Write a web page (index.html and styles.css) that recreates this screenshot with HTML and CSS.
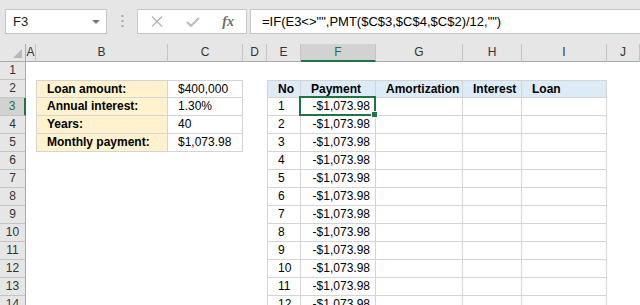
FILE: index.html
```html
<!DOCTYPE html>
<html lang="en">
<head>
    <meta charset="UTF-8">
    <title>PMT loan schedule</title>
    <link rel="stylesheet" href="styles.css">
</head>
<body>
    <div class="formula-bar">
        <div class="name-box">
            <span>F3</span>
            <svg class="caret" width="8" height="4" viewBox="0 0 8 4"><path d="M0 0H8L4 4Z" fill="#7a7a7a"/></svg>
        </div>
        <svg class="grip" width="3" height="13" viewBox="0 0 3 13">
            <rect x="0.5" y="0" width="2" height="2" fill="#a6a6a6"/>
            <rect x="0.5" y="5" width="2" height="2" fill="#a6a6a6"/>
            <rect x="0.5" y="10" width="2" height="2" fill="#a6a6a6"/>
        </svg>
        <div class="fx-buttons">
            <svg width="12" height="11" viewBox="0 0 12 11"><path d="M1 0.5L11 10.5M11 0.5L1 10.5" stroke="#b3b3b3" stroke-width="1.3" fill="none"/></svg>
            <svg width="14" height="10" viewBox="0 0 14 10"><path d="M1 5L5 8.8L13 1" stroke="#bdbdbd" stroke-width="2.2" fill="none"/></svg>
            <span class="fx">fx</span>
        </div>
        <div class="formula">=IF(E3&lt;&gt;"",PMT($C$3,$C$4,$C$2)/12,"")</div>
    </div>

    <div class="sheet">
        <div class="row heads">
            <div class="corner"><svg width="9" height="9" viewBox="0 0 9 9"><path d="M9 0V9H0Z" fill="#b8b8b8"/></svg></div>
            <div>A</div><div>B</div><div>C</div><div>D</div><div>E</div><div class="on">F</div><div>G</div><div>H</div><div>I</div><div>J</div>
        </div>
        <div class="row">
            <div class="rh">1</div>
            <div></div><div></div><div></div><div></div><div></div><div></div><div></div><div></div><div></div><div></div>
        </div>
        <div class="row">
            <div class="rh">2</div>
            <div></div>
            <div class="c lbl top">Loan amount:</div>
            <div class="c val top">$400,000</div>
            <div></div>
            <div class="c no head">No</div>
            <div class="c col head">Payment</div>
            <div class="c col head">Amortization</div>
            <div class="c col head">Interest</div>
            <div class="c col head">Loan</div>
            <div></div>
        </div>
        <div class="row">
            <div class="rh on">3</div>
            <div></div>
            <div class="c lbl">Annual interest:</div>
            <div class="c val">1.30%</div>
            <div></div>
            <div class="c no">1</div>
            <div class="c col amt sel">-$1,073.98</div>
            <div class="c col"></div><div class="c col"></div><div class="c col"></div>
            <div></div>
        </div>
        <div class="row">
            <div class="rh">4</div>
            <div></div>
            <div class="c lbl">Years:</div>
            <div class="c val">40</div>
            <div></div>
            <div class="c no">2</div>
            <div class="c col amt">-$1,073.98</div>
            <div class="c col"></div><div class="c col"></div><div class="c col"></div>
            <div></div>
        </div>
        <div class="row">
            <div class="rh">5</div>
            <div></div>
            <div class="c lbl">Monthly payment:</div>
            <div class="c val">$1,073.98</div>
            <div></div>
            <div class="c no">3</div>
            <div class="c col amt">-$1,073.98</div>
            <div class="c col"></div><div class="c col"></div><div class="c col"></div>
            <div></div>
        </div>
        <div class="row">
            <div class="rh">6</div>
            <div></div><div></div><div></div><div></div>
            <div class="c no">4</div>
            <div class="c col amt">-$1,073.98</div>
            <div class="c col"></div><div class="c col"></div><div class="c col"></div>
            <div></div>
        </div>
        <div class="row">
            <div class="rh">7</div>
            <div></div><div></div><div></div><div></div>
            <div class="c no">5</div>
            <div class="c col amt">-$1,073.98</div>
            <div class="c col"></div><div class="c col"></div><div class="c col"></div>
            <div></div>
        </div>
        <div class="row">
            <div class="rh">8</div>
            <div></div><div></div><div></div><div></div>
            <div class="c no">6</div>
            <div class="c col amt">-$1,073.98</div>
            <div class="c col"></div><div class="c col"></div><div class="c col"></div>
            <div></div>
        </div>
        <div class="row">
            <div class="rh">9</div>
            <div></div><div></div><div></div><div></div>
            <div class="c no">7</div>
            <div class="c col amt">-$1,073.98</div>
            <div class="c col"></div><div class="c col"></div><div class="c col"></div>
            <div></div>
        </div>
        <div class="row">
            <div class="rh">10</div>
            <div></div><div></div><div></div><div></div>
            <div class="c no">8</div>
            <div class="c col amt">-$1,073.98</div>
            <div class="c col"></div><div class="c col"></div><div class="c col"></div>
            <div></div>
        </div>
        <div class="row">
            <div class="rh">11</div>
            <div></div><div></div><div></div><div></div>
            <div class="c no">9</div>
            <div class="c col amt">-$1,073.98</div>
            <div class="c col"></div><div class="c col"></div><div class="c col"></div>
            <div></div>
        </div>
        <div class="row">
            <div class="rh">12</div>
            <div></div><div></div><div></div><div></div>
            <div class="c no">10</div>
            <div class="c col amt">-$1,073.98</div>
            <div class="c col"></div><div class="c col"></div><div class="c col"></div>
            <div></div>
        </div>
        <div class="row">
            <div class="rh">13</div>
            <div></div><div></div><div></div><div></div>
            <div class="c no">11</div>
            <div class="c col amt">-$1,073.98</div>
            <div class="c col"></div><div class="c col"></div><div class="c col"></div>
            <div></div>
        </div>
        <div class="row">
            <div class="rh">14</div>
            <div></div><div></div><div></div><div></div>
            <div class="c no">12</div>
            <div class="c col amt">-$1,073.98</div>
            <div class="c col"></div><div class="c col"></div><div class="c col"></div>
            <div></div>
        </div>
    </div>
</body>
</html>
```

FILE: styles.css
```css
body {
    margin: 0;
    height: 305px;
    overflow: hidden;
    font-family: "Liberation Sans", Arial, sans-serif;
    font-size: 12px;
    color: #000;
    background: #fff;
}

/* formula bar */
.formula-bar {
    display: flex;
    align-items: flex-start;
    height: 44px;
    padding-top: 9px;
    box-sizing: border-box;
    background: #e6e6e6;
}
.name-box {
    display: flex;
    align-items: center;
    justify-content: space-between;
    width: 102px;
    height: 25px;
    margin-left: 5px;
    padding: 0 6px 0 7px;
    box-sizing: border-box;
    background: #fff;
    border: 1px solid #c6c6c6;
    font-size: 13px;
    color: #222;
}
.grip {
    margin: 6px 13px 0 14px;
}
.fx-buttons {
    display: flex;
    align-items: center;
    justify-content: space-between;
    width: 110px;
    height: 25px;
    padding: 0 12px 0 13px;
    box-sizing: border-box;
    background: #fff;
    border: 1px solid #c6c6c6;
}
.fx {
    font-family: "Liberation Serif", serif;
    font-style: italic;
    font-weight: bold;
    font-size: 14px;
    color: #6d6d6d;
}
.formula {
    flex: 1;
    height: 25px;
    margin-left: 3px;
    padding-left: 11px;
    box-sizing: border-box;
    line-height: 23px;
    background: #fff;
    border: 1px solid #c6c6c6;
    border-right: none;
    font-size: 13px;
    white-space: nowrap;
}

/* grid */
.row {
    display: grid;
    grid-template-columns: 26px 10px 132px 75px 24px 34px 75px 87px 59px 85px 1fr;
    height: 18px;
}
.row > div {
    box-sizing: border-box;
    line-height: 17px;
    white-space: nowrap;
    overflow: hidden;
}
.heads > div {
    text-align: center;
    color: #333;
    background: #e6e6e6;
    border-right: 1px solid #c4c4c4;
    border-bottom: 1px solid #ababab;
}
.heads .corner {
    display: flex;
    justify-content: flex-end;
    align-items: flex-end;
    padding: 0 3px 3px 0;
    border-right-color: #ababab;
}
.heads .on {
    color: #217346;
    background: #d2d2d2;
    border-bottom: 2px solid #217346;
}
.rh {
    text-align: center;
    color: #333;
    background: #e6e6e6;
    border-right: 1px solid #ababab;
    border-bottom: 1px solid #c4c4c4;
}
.rh.on {
    color: #217346;
    background: #d2d2d2;
    border-right: 2px solid #217346;
}

/* cells */
.c {
    padding-left: 10px;
    border-bottom: 1px solid #d4d4d4;
}
.top {
    border-top: 1px solid #d4d4d4;
    line-height: 16px !important;
}
.lbl {
    font-weight: bold;
    background: #fff2cc;
    border-left: 1px solid #d4d4d4;
    border-right: 1px solid #d4d4d4;
}
.val {
    border-right: 1px solid #d4d4d4;
}
.no {
    border-left: 1px solid #d4d4d4;
    border-right: 1px solid #d4d4d4;
}
.col {
    border-right: 1px solid #d4d4d4;
}
.head {
    font-weight: bold;
    background: #ddebf7;
    border-top: 1px solid #d4d4d4;
    line-height: 16px !important;
}
.amt {
    text-align: right;
    padding: 0 5px 0 0;
}
.row > .sel {
    position: relative;
    overflow: visible;
}
.sel::after {
    content: "";
    position: absolute;
    top: -2px;
    left: -2px;
    right: -1px;
    bottom: -1px;
    border: 2px solid #217346;
}
.sel::before {
    content: "";
    position: absolute;
    right: -3px;
    bottom: -3px;
    width: 7px;
    height: 7px;
    box-sizing: border-box;
    background: #217346;
    border: 1px solid #fff;
    z-index: 1;
}
```
